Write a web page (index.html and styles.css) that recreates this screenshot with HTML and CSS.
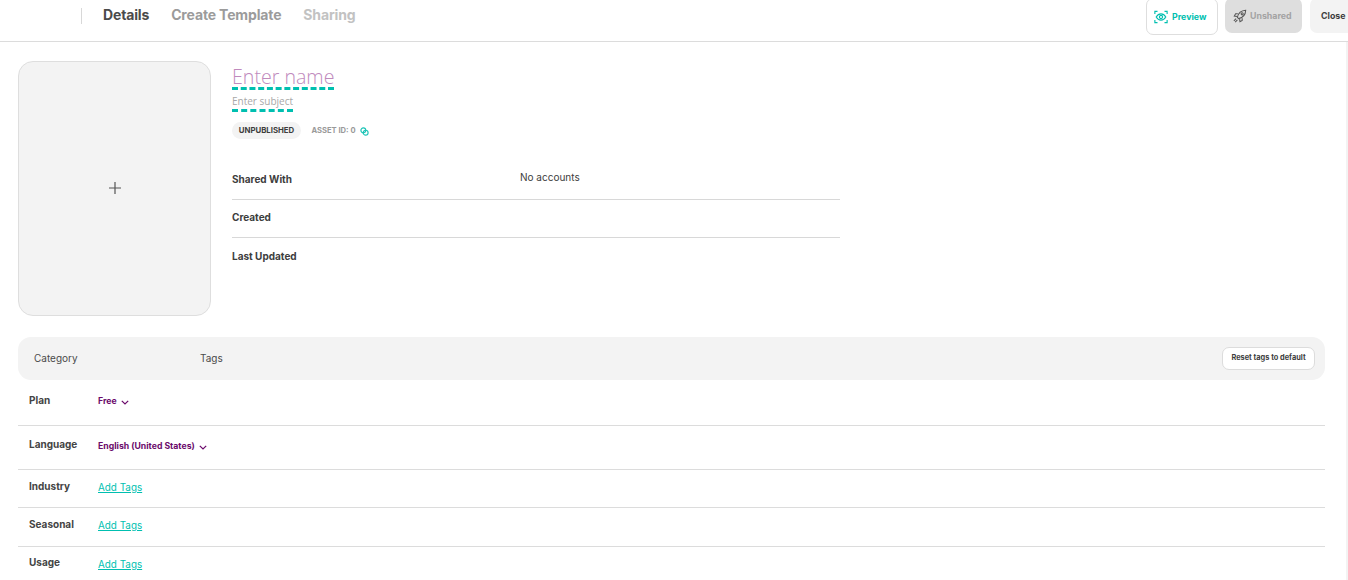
FILE: index.html
```html
<!DOCTYPE html>
<html lang="en">
<head>
<meta charset="utf-8">
<title>Details</title>
<link rel="stylesheet" href="styles.css">
</head>
<body>
<header class="topbar">
  <div class="logo-slot"></div>
  <nav class="tabs">
    <span class="tab tab-active">Details</span>
    <span class="tab tab-mid">Create Template</span>
    <span class="tab tab-light">Sharing</span>
  </nav>
  <div class="actions">
    <button class="btn btn-preview">
      <svg class="btn-icon" viewBox="0 0 16 16" fill="none" stroke="#00bfb0" stroke-width="1.300">
        <path d="M1 4.500V1.500H4M12 1.500H15V4.500M15 11.500V14.500H12M4 14.500H1V11.500"/>
        <path d="M2.500 8C4 5.500 6 4.500 8 4.500S12 5.500 13.500 8C12 10.500 10 11.500 8 11.500S4 10.500 2.500 8Z"/>
        <circle cx="8" cy="8" r="1.800"/>
      </svg>
      Preview
    </button>
    <button class="btn btn-unshared">
      <svg class="btn-icon" viewBox="0 0 16 16" fill="none" stroke="#555" stroke-width="1.200">
        <path d="M5 9.500C6 5 9.500 1.800 14.500 1.500C14.300 6.500 11 10 6.500 11Z"/>
        <circle cx="10.500" cy="5.500" r="1.200"/>
        <path d="M5.500 5.500H3L1.500 8L4.500 8.500M10.500 10.500V13L8 14.500L7.500 11.500M3.500 11L1 13.500M5 12.500L2.500 15"/>
      </svg>
      Unshared
    </button>
    <button class="btn btn-close">Close</button>
  </div>
</header>

<main class="page">
  <section class="summary">
    <div class="thumb">
      <svg class="thumb-plus" viewBox="0 0 12 12" stroke="#555" stroke-width="1.200"><path d="M6 0V12M0 6H12"/></svg>
    </div>
    <div class="info">
      <h1 class="name"><span class="dashed">Enter name</span></h1>
      <p class="subject"><span class="dashed">Enter subject</span></p>
      <div class="meta">
        <span class="pill">UNPUBLISHED</span>
        <span class="asset">ASSET ID: 0</span>
        <svg class="copy" viewBox="0 0 10 10" fill="none" stroke="#1cc4b6" stroke-width="1.300">
          <circle cx="3.700" cy="3.700" r="2.700"/><circle cx="6.300" cy="6.300" r="2.700"/>
        </svg>
      </div>
      <dl class="facts">
        <div class="fact fact-shared"><dt>Shared With</dt><dd>No accounts</dd></div>
        <div class="fact fact-created"><dt>Created</dt><dd></dd></div>
        <div class="fact fact-updated"><dt>Last Updated</dt><dd></dd></div>
      </dl>
    </div>
  </section>

  <section class="tags">
    <div class="tags-head">
      <span class="head-cat">Category</span>
      <span class="head-tags">Tags</span>
      <button class="reset">Reset tags to default</button>
    </div>
    <div class="row row-plan">
      <span class="row-label">Plan</span>
      <span class="select">Free <svg class="chev" viewBox="0 0 8 5" fill="none" stroke="#6b0a6b" stroke-width="1.200"><path d="M.8.800 4 4 7.200.800"/></svg></span>
    </div>
    <div class="row row-lang">
      <span class="row-label">Language</span>
      <span class="select">English (United States) <svg class="chev" viewBox="0 0 8 5" fill="none" stroke="#6b0a6b" stroke-width="1.200"><path d="M.8.800 4 4 7.200.800"/></svg></span>
    </div>
    <div class="row row-ind">
      <span class="row-label">Industry</span>
      <a class="add" href="#">Add Tags</a>
    </div>
    <div class="row row-sea">
      <span class="row-label">Seasonal</span>
      <a class="add" href="#">Add Tags</a>
    </div>
    <div class="row row-use">
      <span class="row-label">Usage</span>
      <a class="add" href="#">Add Tags</a>
    </div>
  </section>
</main>
</body>
</html>
```
FILE: styles.css
```css
* { box-sizing: border-box; }
html, body { margin: 0; padding: 0; height: 580px; overflow: hidden; background: #fff; }
body { font-family: "Inter", "Liberation Sans", sans-serif; color: #3d3d3d; }

.topbar {
  height: 42px;
  border-bottom: 1px solid #dcdcdc;
  display: flex;
  align-items: flex-start;
}
.logo-slot {
  width: 82px;
  height: 16px;
  margin-top: 8px;
  border-right: 1px solid #d8d8d8;
  flex: none;
}
.tabs { display: flex; gap: 22px; padding-left: 21px; height: 29px; align-items: center; }
.tab { font-size: 14px; font-weight: 700; letter-spacing: -.15px; }
.tab-active { color: #4a4a4a; }
.tab-mid { color: #9b9b9b; }
.tab-light { color: #c2c2c2; }

.actions { margin-left: auto; display: flex; margin-top: -2px; }
.btn {
  height: 35px;
  border-radius: 7px;
  border: 1px solid transparent;
  font: 700 8.800px "Inter", "Liberation Sans", sans-serif;
  display: flex;
  align-items: center;
  padding: 0;
}
.btn-icon { width: 14px; height: 14px; flex: none; }
.btn-preview { width: 72px; background: #fff; border-color: #dedede; color: #00bfb0; gap: 4px; padding-left: 7px; height: 37px; margin-right: 7px; }
.btn-unshared { width: 77px; background: #dedede; color: #a3a3a3; gap: 3px; padding-left: 7px; margin-right: 8px; }
.btn-close { width: 38px; background: #f3f3f3; color: #3d3d3d; padding-left: 10px; border-radius: 7px 0 0 7px; }

.page { padding: 19px 21px 0 18px; height: 538px; border-right: 2px solid #f3f3f3; }

.summary { display: flex; gap: 21px; height: 255px; }
.thumb {
  width: 193px;
  height: 255px;
  background: #f3f3f3;
  border: 1px solid #dedede;
  border-radius: 15px;
  display: flex;
  align-items: center;
  justify-content: center;
  flex: none;
}
.thumb-plus { width: 12px; height: 12px; margin-top: -1px; }

.info { width: 608px; padding-top: 3px; }
.name {
  margin: 0;
  height: 28px;
  font: 300 19.600px/26px "Open Sans", "Liberation Sans", sans-serif;
  color: #c08abd;
}
.subject {
  margin: 0;
  height: 20px;
  padding-top: 2px;
  font: 400 10px/15px "Open Sans", "Liberation Sans", sans-serif;
  color: #a8a8a8;
}
.dashed {
  display: inline-block;
  padding-bottom: 0;
  border-bottom: 3px dashed #00bfb0;
}
.name .dashed { height: 26px; }
.subject .dashed { height: 18px; }
.meta { display: flex; align-items: center; height: 17px; margin-top: 10px; }
.pill {
  height: 17px;
  width: 69px;
  border-radius: 9px;
  background: #f3f3f3;
  font-size: 7.800px;
  font-weight: 700;
  line-height: 17px;
  text-align: center;
  color: #3d3d3d;
}
.asset { margin-left: 10.500px; font-size: 7.600px; font-weight: 700; color: #9a9a9a; }
.copy { width: 9px; height: 9px; margin-left: 4px; margin-top: 1px; }

.facts { margin: 0; padding: 0; }
.fact { display: flex; border-bottom: 1px solid #d8d8d8; }
.fact:last-child { border-bottom: 0; }
.fact dt { width: 288px; font-size: 10px; font-weight: 700; color: #3d3d3d; }
.fact dd { margin: 0; font-size: 10px; color: #3d3d3d; }
.fact-shared { padding-top: 24px; margin-top: 10px; height: 51px; }
.fact-shared dd { margin-top: -2px; }
.fact-created { height: 38px; padding-top: 11px; }
.fact-updated { height: 38px; padding-top: 12px; }

.tags { margin-top: 21px; }
.tags-head {
  height: 43px;
  background: #f3f3f3;
  border-radius: 13px;
  display: flex;
  align-items: center;
  padding: 0 10px 2px 16px;
  font-size: 10px;
  color: #4a4a4a;
}
.head-cat { width: 166px; }
.reset {
  margin-left: auto;
  margin-top: 2px;
  width: 93px;
  height: 23px;
  border: 1px solid #dcdcdc;
  border-radius: 7px;
  background: #fff;
  font: 700 7.400px/19px "Inter", "Liberation Sans", sans-serif;
  color: #3d3d3d;
  padding: 0 0 2px;
}
.row { display: flex; align-items: flex-start; border-bottom: 1px solid #dcdcdc; padding-left: 11px; }
.row:last-child { border-bottom: 0; }
.row-label { width: 69px; font-size: 10px; font-weight: 700; color: #444; flex: none; }
.select { font-size: 8.700px; font-weight: 700; color: #6b0a6b; display: flex; align-items: center; gap: 4px; }
.chev { width: 8px; height: 5px; margin-top: 2px; }
.add { font-size: 9.900px; color: #00bfb0; }
.row-plan { height: 46px; padding-top: 14px; }
.row-plan .select { margin-top: 2px; }
.row-lang { height: 44px; padding-top: 12px; }
.row-lang .select { margin-top: 3px; }
.row-ind { height: 38px; padding-top: 10px; }
.row-ind .add { margin-top: 1px; }
.row-sea { height: 39px; padding-top: 10px; }
.row-sea .add { margin-top: 1px; }
.row-use { height: 34px; padding-top: 9px; }
.row-use .add { margin-top: 2px; }
```
